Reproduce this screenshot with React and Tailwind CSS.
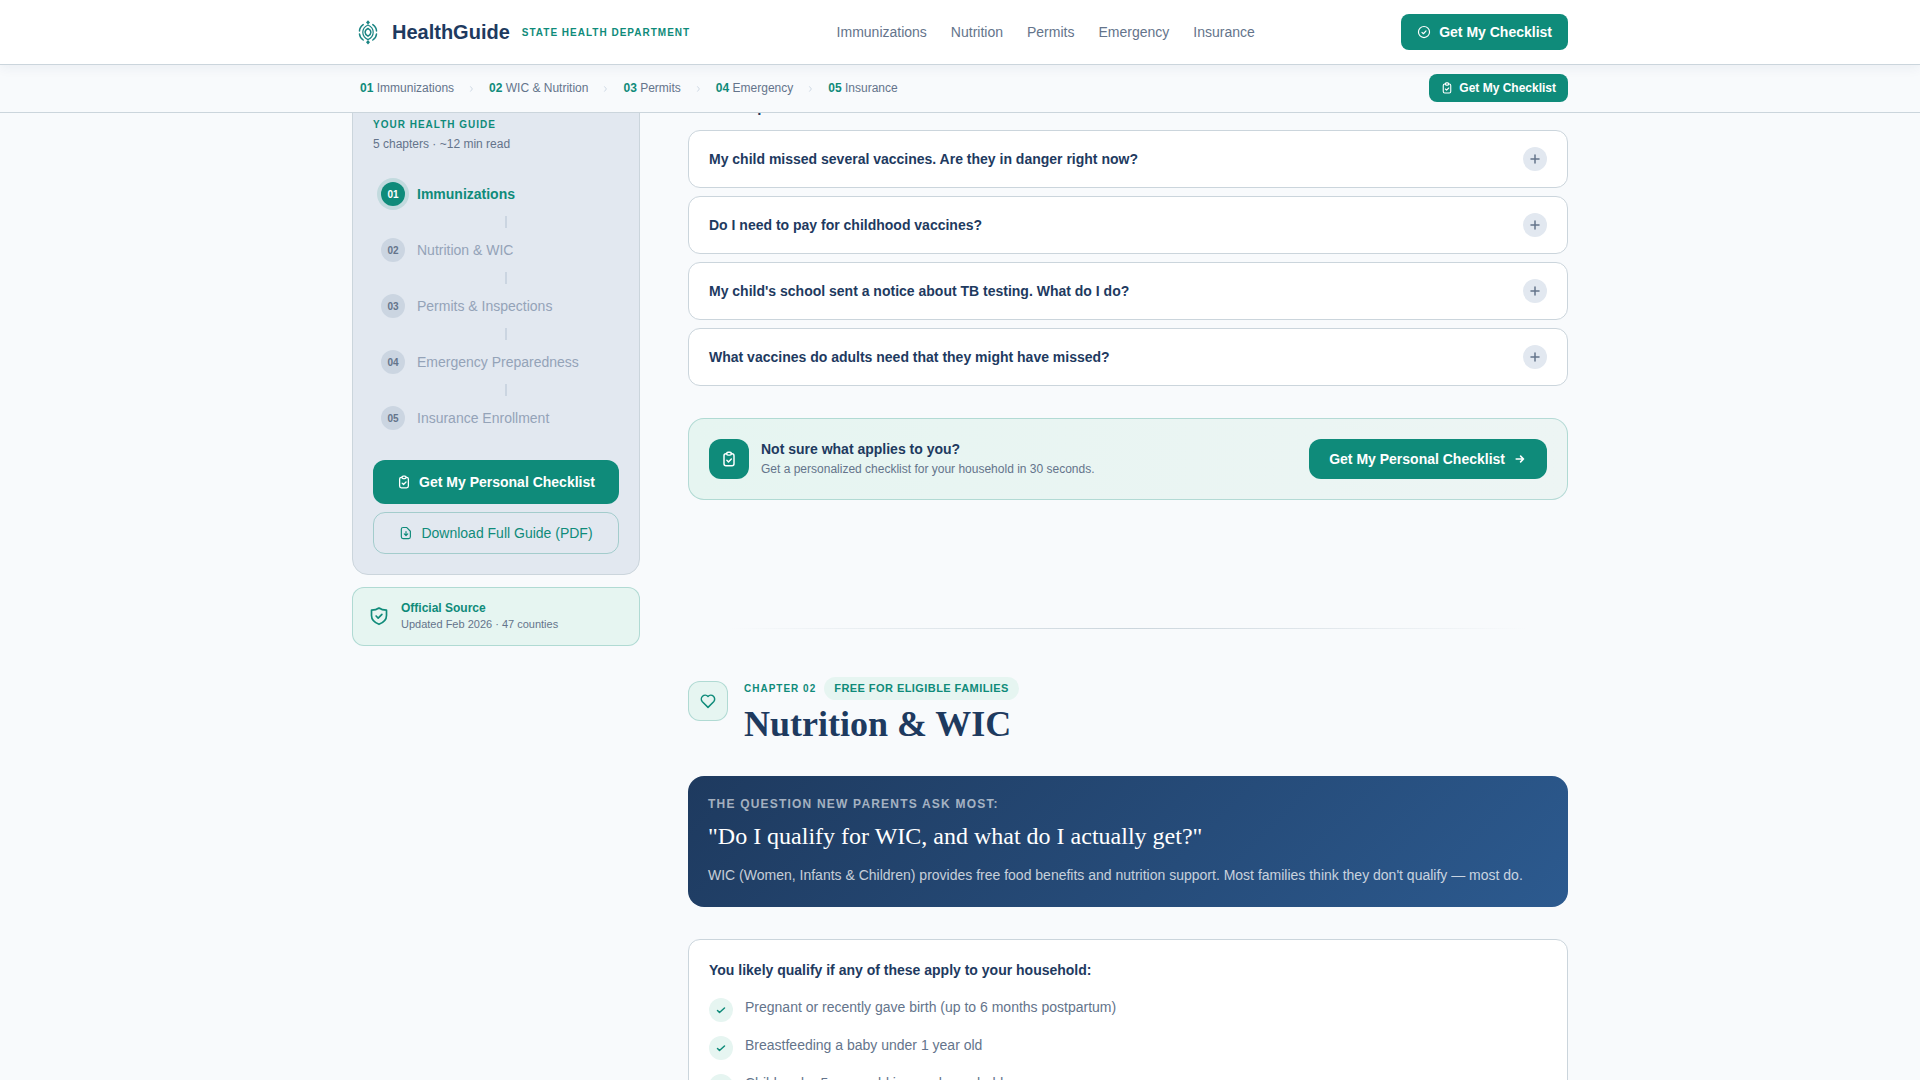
import React, { useState } from 'react'

const chapters = [
    { num: '01', label: 'Immunizations', short: 'Immunizations', nav: 'Immunizations' },
    { num: '02', label: 'Nutrition & WIC', short: 'WIC & Nutrition', nav: 'Nutrition' },
    { num: '03', label: 'Permits & Inspections', short: 'Permits', nav: 'Permits' },
    { num: '04', label: 'Emergency Preparedness', short: 'Emergency', nav: 'Emergency' },
    { num: '05', label: 'Insurance Enrollment', short: 'Insurance', nav: 'Insurance' },
];

const questions = [
    'My child missed several vaccines. Are they in danger right now?',
    'Do I need to pay for childhood vaccines?',
    "My child's school sent a notice about TB testing. What do I do?",
    'What vaccines do adults need that they might have missed?',
];

const qualifiers = [
    'Pregnant or recently gave birth (up to 6 months postpartum)',
    'Breastfeeding a baby under 1 year old',
    'Child under 5 years old in your household',
];

function Icon({ className, strokeWidth = 2, children }) {
    return (
        <svg
            viewBox="0 0 24 24"
            fill="none"
            stroke="currentColor"
            strokeWidth={strokeWidth}
            strokeLinecap="round"
            strokeLinejoin="round"
            aria-hidden="true"
            className={`shrink-0 ${className}`}
        >
            {children}
        </svg>
    );
}

function ClipboardIcon({ className }) {
    return (
        <Icon className={className} strokeWidth={2.2}>
            <path d="M8.500 4H7.500a3 3 0 0 0-3 3v12a3 3 0 0 0 3 3h9a3 3 0 0 0 3-3V7a3 3 0 0 0-3-3h-1" />
            <rect x="8.500" y="1.800" width="7" height="4.400" rx="2" />
            <path d="m8.800 14 2.400 2.400 4.300-4.400" />
        </Icon>
    );
}

function Logo() {
    return (
        <svg viewBox="0 0 32 32" className="w-8 h-8" fill="none" stroke="#1b8583" strokeWidth="1.5" strokeLinecap="round" aria-hidden="true">
            <path d="M16 12.400c1.800 1 2.900 2.300 2.900 3.900s-1.100 2.900-2.900 3.900c-1.800-1-2.900-2.300-2.900-3.900s1.100-2.900 2.900-3.900z" strokeLinejoin="round" />
            <path d="M16 9c-3.200 1.500-5.200 4.200-5.200 7.300s2 5.800 5.200 7.300c3.200-1.500 5.200-4.200 5.200-7.300S19.200 10.500 16 9z" strokeWidth="1.200" />
            <path d="M11.200 8.600C8.900 10.300 7.500 12.600 7.500 15M7.500 18c.2 2.400 1.500 4.500 3.700 6M20.800 8.600c2.300 1.700 3.700 4 3.700 6.400M24.500 18c-.2 2.400-1.500 4.500-3.700 6" />
            <path d="m16 4.200 2 2.200-2 2.200-2-2.200zM16 24l2 2.200-2 2.200-2-2.200z" fill="#1b8583" stroke="none" />
        </svg>
    );
}

function Header() {
    return (
        <header className="sticky top-0 z-10">
            <div className="relative bg-white border-b border-[#cbd5dc] shadow-[0_2px_12px_rgba(30,58,95,0.07)]">
                <div className="max-w-[1280px] mx-auto px-8 h-16 flex items-center justify-between">
                    <a href="#top" className="flex items-center gap-2">
                        <Logo />
                        <span className="text-xl font-bold text-[#1e3a5f]">HealthGuide</span>
                        <span className="ml-1 text-[10px] font-bold tracking-[0.1em] text-[#0f8b7a]">STATE HEALTH DEPARTMENT</span>
                    </a>
                    <nav className="flex items-center gap-6 text-sm text-[#64748b]">
                        {chapters.map(c => (
                            <a key={c.num} href={`#chapter-${c.num}`}>{c.nav}</a>
                        ))}
                    </nav>
                    <button type="button" className="h-9 px-4 flex items-center gap-2 rounded-lg bg-[#0f8b7a] text-white text-sm font-semibold">
                        <Icon className="w-3.5 h-3.5">
                            <circle cx="12" cy="12" r="9.500" />
                            <path d="m8.500 12.500 2.500 2.500 4.500-5" />
                        </Icon>
                        Get My Checklist
                    </button>
                </div>
            </div>
            <div className="bg-[#f8fafc] border-b border-[#cbd5dc]">
                <div className="max-w-[1280px] mx-auto px-8 h-[47px] pb-px flex items-center justify-between">
                    <nav className="flex items-center gap-1 text-xs text-[#64748b]">
                        {chapters.map((c, i) => (
                            <React.Fragment key={c.num}>
                                {i > 0 && (
                                    <Icon className="w-[11px] h-[11px] text-[#cbd5e1]">
                                        <path d="m10 8 4 5-4 5" />
                                    </Icon>
                                )}
                                <a href={`#chapter-${c.num}`} className="px-2">
                                    <span className="font-bold text-[#0f8b7a]">{c.num}</span> {c.short}
                                </a>
                            </React.Fragment>
                        ))}
                    </nav>
                    <button type="button" className="h-7 px-3 flex items-center gap-1.5 rounded-lg bg-[#0f8b7a] text-white text-xs font-semibold">
                        <ClipboardIcon className="w-3 h-3" />
                        Get My Checklist
                    </button>
                </div>
            </div>
        </header>
    );
}

function Sidebar() {
    const active = '01';

    return (
        <aside className="w-72 shrink-0 flex flex-col gap-3">
            <div className="p-5 rounded-2xl border border-[#cbd5dc] bg-[#e2e8f0]">
                <div className="text-[10px] leading-[15px] font-bold tracking-[0.1em] text-[#0f8b7a]">YOUR HEALTH GUIDE</div>
                <div className="mt-1 mb-5 text-xs text-[#64748b]">5 chapters · ~12 min read</div>
                {chapters.map((c, i) => (
                    <React.Fragment key={c.num}>
                        {i > 0 && (
                            <div className="ml-5 flex justify-center">
                                <div className="w-0.5 h-3 bg-[#cbd5e1]" />
                            </div>
                        )}
                        <a href={`#chapter-${c.num}`} className="h-11 px-2 flex items-center gap-3">
                            <span
                                className={
                                    c.num === active
                                        ? 'w-6 h-6 rounded-full flex items-center justify-center text-[10px] font-bold bg-[#0f8b7a] text-white ring-4 ring-[#0f8b7a]/15'
                                        : 'w-6 h-6 rounded-full flex items-center justify-center text-[10px] font-bold bg-[#cbd5e1] text-[#64748b]'
                                }
                            >
                                {c.num}
                            </span>
                            <span className={c.num === active ? 'text-sm font-semibold text-[#0f8b7a]' : 'text-sm text-[#94a3b8]'}>
                                {c.label}
                            </span>
                        </a>
                    </React.Fragment>
                ))}
                <button type="button" className="mt-5 w-full h-11 flex items-center justify-center gap-2 rounded-xl bg-[#0f8b7a] text-white text-sm font-semibold">
                    <ClipboardIcon className="w-3.5 h-3.5" />
                    Get My Personal Checklist
                </button>
                <button type="button" className="mt-2 w-full h-[42px] flex items-center justify-center gap-2 rounded-xl border border-[#0f8b7a]/30 text-[#0f8b7a] text-sm">
                    <Icon className="w-3.5 h-3.5">
                        <path d="M13 2.500H7A3 3 0 0 0 4 5.500v13a3 3 0 0 0 3 3h9.500a3 3 0 0 0 3-3V9z" />
                        <path d="M12 9.500v6M9 13.500l3 3 3-3" />
                    </Icon>
                    Download Full Guide (PDF)
                </button>
            </div>
            <div className="px-4 py-3 flex items-center gap-3 rounded-xl border border-[#0f8b7a]/25 bg-[#e6f5f1]">
                <Icon className="w-5 h-5 text-[#0f8b7a]">
                    <path d="M12 1.200c2.500 1.900 5.300 2.600 9 2.600v6.500c0 5-3.300 8.300-9 10.500-5.700-2.200-9-5.500-9-10.500V3.800c3.700 0 6.500-.7 9-2.600z" />
                    <path d="m8.500 10.800 2.500 2.500 4.500-4.500" />
                </Icon>
                <div>
                    <div className="text-xs font-semibold text-[#0f8b7a]">Official Source</div>
                    <div className="text-[11px] leading-[17px] text-[#64748b]">Updated Feb 2026 · 47 counties</div>
                </div>
            </div>
        </aside>
    );
}

function FaqItem({ question }) {
    const [open, setOpen] = useState(false);

    return (
        <button
            type="button"
            aria-expanded={open}
            onClick={() => setOpen(!open)}
            className="h-[58px] px-5 flex items-center justify-between rounded-xl border border-[#cbd5dc] bg-white text-left text-sm font-semibold text-[#1e3a5f]"
        >
            {question}
            <span className="w-6 h-6 rounded-full bg-[#e2e8f0] text-[#64748b] flex items-center justify-center">
                <Icon className="w-3 h-3" strokeWidth={3}>
                    <path d="M12 4v16M4 12h16" />
                </Icon>
            </span>
        </button>
    );
}

function App() {
    return (
        <div id="top" className="min-h-screen bg-[#f8fafc] font-['Liberation_Sans',Arial,sans-serif]">
            <Header />
            {/* content is tucked under the sticky bars */}
            <div className="max-w-[1280px] mx-auto -mt-[17px] px-8 flex items-start gap-12">
                <Sidebar />
                <main className="flex-1 min-w-0">
                    <section id="chapter-01">
                        <h3 className="mb-3 text-[15px] leading-[22px] font-semibold text-[#1e3a5f]">Common parent concerns</h3>
                        <div className="flex flex-col gap-2">
                            {questions.map(q => <FaqItem key={q} question={q} />)}
                        </div>
                        <div className="mt-8 p-5 flex items-center gap-3 rounded-2xl border border-[#0f8b7a]/25 bg-linear-to-r from-[#e6f5f1] to-[#edf5f4]">
                            <div className="w-10 h-10 rounded-xl bg-[#0f8b7a] text-white flex items-center justify-center">
                                <ClipboardIcon className="w-4 h-4" />
                            </div>
                            <div className="flex-1 pb-0.5">
                                <div className="text-sm font-semibold text-[#1e3a5f]">Not sure what applies to you?</div>
                                <div className="mt-0.5 text-xs text-[#64748b]">Get a personalized checklist for your household in 30 seconds.</div>
                            </div>
                            <button type="button" className="h-10 px-5 flex items-center gap-2 rounded-xl bg-[#0f8b7a] text-white text-sm font-semibold">
                                Get My Personal Checklist
                                <Icon className="w-3.5 h-3.5" strokeWidth={2.8}>
                                    <path d="M5.500 12h12.500M13 7l5 5-5 5" />
                                </Icon>
                            </button>
                        </div>
                    </section>

                    <div className="mt-32 mb-12 mx-10 h-px bg-linear-to-r from-transparent via-[#cbd5dc] to-transparent" />

                    <section id="chapter-02">
                        <div className="flex items-start gap-4">
                            <div className="mt-1 w-10 h-10 rounded-xl border border-[#0f8b7a]/25 bg-[#e6f5f1] text-[#0f8b7a] flex items-center justify-center">
                                <Icon className="w-[18px] h-[18px]">
                                    <path d="M12 20.500 4.500 13a5 5 0 0 1 7.500-7 5 5 0 0 1 7.500 7z" />
                                </Icon>
                            </div>
                            <div>
                                <div className="flex items-center gap-2 font-bold text-[#0f8b7a]">
                                    <span className="text-[10px] tracking-[0.1em]">CHAPTER 02</span>
                                    <span className="px-2.5 py-1 rounded-full bg-[#e6f5f1] text-[11px] leading-[15px] tracking-[0.04em]">FREE FOR ELIGIBLE FAMILIES</span>
                                </div>
                                <h2 className="mt-1 text-4xl font-bold text-[#1e3a5f] font-['Liberation_Serif',serif]">Nutrition & WIC</h2>
                            </div>
                        </div>

                        <div className="mt-8 p-5 rounded-2xl bg-linear-135 from-[#1e3a5f] to-[#2c5a8f]">
                            <div className="text-xs font-semibold tracking-[0.1em] text-white/60">THE QUESTION NEW PARENTS ASK MOST:</div>
                            <p className="mt-2 text-2xl text-white font-['Liberation_Serif',serif]">"Do I qualify for WIC, and what do I actually get?"</p>
                            <p className="mt-3 text-sm leading-[23px] text-white/75">
                                WIC (Women, Infants & Children) provides free food benefits and nutrition support. Most families think they don't qualify — most do.
                            </p>
                        </div>

                        <div className="mt-8 p-5 rounded-xl border border-[#cbd5dc] bg-white">
                            <h3 className="mb-4 text-sm font-semibold text-[#1e3a5f]">You likely qualify if any of these apply to your household:</h3>
                            <ul className="flex flex-col gap-3">
                                {qualifiers.map(q => (
                                    <li key={q} className="flex items-start gap-3">
                                        <span className="mt-0.5 w-6 h-6 rounded-full bg-[#e6f5f1] text-[#0f8b7a] flex items-center justify-center">
                                            <Icon className="w-3 h-3" strokeWidth={3}>
                                                <path d="m5 13 4 4L19 8" />
                                            </Icon>
                                        </span>
                                        <span className="text-sm leading-[23px] text-[#64748b]">{q}</span>
                                    </li>
                                ))}
                            </ul>
                        </div>
                    </section>
                </main>
            </div>
        </div>
    );
}

export default App;
